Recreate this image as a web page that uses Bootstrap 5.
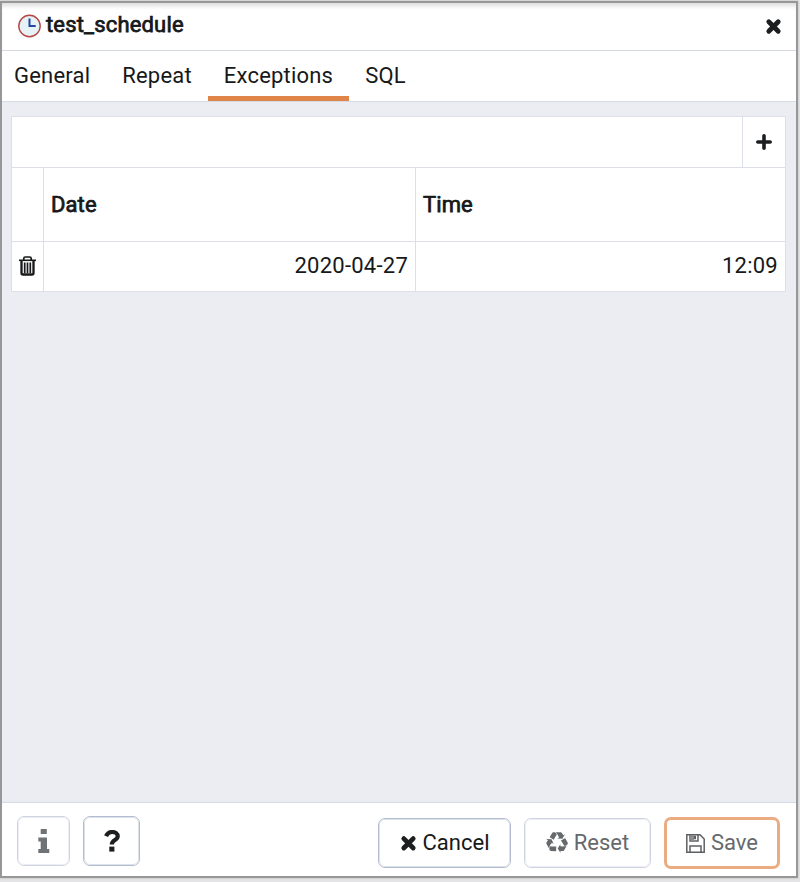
<!DOCTYPE html>
<html lang="en">
<head>
<meta charset="utf-8">
<title>test_schedule</title>
<meta name="viewport" content="width=device-width, initial-scale=1">
<link rel="stylesheet" href="https://cdn.jsdelivr.net/npm/bootstrap@5.3.0/dist/css/bootstrap.min.css">
<style>
html, body { height: 100%; }
body { font-family: Roboto, sans-serif; font-size: 22px; line-height: 30px; color: #161819; background: #e4e4e6; padding: 1px 2px 4px 0; overflow: hidden; }
.dialog { height: 877px; border: 2px solid #979797; background: #ebedf3; box-shadow: 0 0 2px #bbb; }
.dialog svg { display: block; flex: none; }
.title-bar { height: 48px; padding: 0 14px 0 15px; border-bottom: 1px solid #d5d9e3; box-shadow: inset 0 5px 4px -2px #dedede; }
.title-bar .clock { margin-top: -1px; }
.heavy { font-weight: 400; -webkit-text-stroke: .75px currentColor; }
.title-text { margin: -3px 0 0 5px; letter-spacing: .17px; }
.tab-strip { height: 51px; border-bottom: 1px solid #d8dbe3; }
.tab-strip .nav-link { height: 50px; padding: 10px 16px 0; color: #161819; letter-spacing: .2px; border-bottom: 5px solid transparent; }
.tab-strip .nav-link.active { border-color: #e0854a; }
.tab-strip .tab-first { padding-left: 12px; }
.content-pane { padding: 14px 10px 0 9px; }
.tool-row { height: 52px; border: 1px solid #dcdfe7; }
.add-btn { width: 43px; border: 0; border-left: 1px solid #dcdfe7; background: none; padding: 0; }
.grid { table-layout: fixed; margin: 0; border-collapse: separate; border-spacing: 0; border-left: 1px solid #dcdfe7; color: #161819; }
.grid th, .grid td { border: solid #dcdfe7; border-width: 0 1px 1px 0; background: #fff; padding: 0 7px; vertical-align: middle; }
.grid th { height: 74px; letter-spacing: .1px; }
.grid td { height: 50px; padding-bottom: 2px; letter-spacing: .25px; }
.grid td.text-end { padding-bottom: 1px; }
.col-tool { width: 32px; }
.col-date { width: 372px; }
.footer-bar { height: 74px; border-top: 1px solid #d5d9e3; padding: 0 16px 0 15px; }
.footer-bar .btn { height: 50px; font-size: 22px; line-height: 30px; border: 1.5px solid #b4bccf; outline: 1px solid #dde1ea; outline-offset: -2px; border-radius: 7px; padding: 0; color: #161819; }
.footer-bar .btn.dim { color: #66696c; border-color: #cfd4e0; outline-color: #eceef3; }
.footer-bar .btn.save { height: 52px; width: 116px; margin-top: -1px; border: 3px solid #ebac81; outline: 0; }
.w-info { width: 53px; }
.w-help { width: 57px; }
.w-cancel { width: 133px; }
.w-reset { width: 127px; }
.left-tools { gap: 13px; padding-top: 13px; }
.right-tools { gap: 13px; padding-top: 15px; }
.right-tools .btn { gap: 6px; }
</style>
</head>
<body>
<main class="dialog d-flex flex-column">
  <header class="title-bar bg-white d-flex align-items-center justify-content-between">
    <div class="d-flex align-items-center">
      <svg class="clock" width="24" height="24" viewBox="0 0 24 24"><circle cx="12.5" cy="12" r="10.7" fill="#e7f2f7" stroke="#b84444" stroke-width="1.4"/><path d="M12.5 4.5V12.1H18.7" fill="none" stroke="#2447a6" stroke-width="2"/></svg>
      <span class="heavy title-text">test_schedule</span>
    </div>
    <svg width="17" height="17" viewBox="0 0 17 17"><path d="M3.8 3.8L13.2 13.2M13.2 3.8L3.8 13.2" stroke="#1c1e20" stroke-width="4.8" stroke-linecap="round"/></svg>
  </header>
  <nav class="tab-strip nav bg-white flex-nowrap">
    <a class="nav-link tab-first" href="#">General</a>
    <a class="nav-link" href="#">Repeat</a>
    <a class="nav-link active" href="#">Exceptions</a>
    <a class="nav-link" href="#">SQL</a>
  </nav>
  <section class="content-pane flex-grow-1">
    <div class="tool-row bg-white d-flex justify-content-end">
      <button class="add-btn d-flex align-items-center justify-content-center" aria-label="Add row">
        <svg width="16" height="16" viewBox="0 0 16 16"><path d="M8 1.8V14.2M1.8 8H14.2" stroke="#1c1e20" stroke-width="3.6" stroke-linecap="round"/></svg>
      </button>
    </div>
    <table class="grid w-100">
      <colgroup><col class="col-tool"><col class="col-date"><col></colgroup>
      <thead><tr><th></th><th><span class="heavy">Date</span></th><th><span class="heavy">Time</span></th></tr></thead>
      <tbody><tr>
        <td><svg width="17" height="20" viewBox="0 0 17 20" fill="none" stroke="#161819"><path d="M0 4.3H17" stroke-width="1.6"/><path d="M4.8 4V2.5Q4.8 1 6.3 1H10.7Q12.2 1 12.2 2.5V4" stroke-width="1.7"/><path d="M2.5 5V17Q2.5 18.5 4 18.5H13Q14.5 18.5 14.5 17V5" stroke-width="2.3"/><path d="M5.7 6.5V17M8.5 6.5V17M11.3 6.5V17" stroke-width="1.7"/></svg></td>
        <td class="text-end">2020-04-27</td><td class="text-end">12:09</td>
      </tr></tbody>
    </table>
  </section>
  <footer class="footer-bar bg-white d-flex justify-content-between">
    <div class="d-flex left-tools">
      <button class="btn dim w-info d-flex align-items-center justify-content-center" aria-label="Info">
        <svg width="12" height="24" viewBox="0 0 12 24" fill="#707375"><path d="M2.7 0H8.8V5H2.7ZM.3 8.5H9V20H11.3V24H.3V20H2.7V12.5H.3Z"/></svg>
      </button>
      <button class="btn w-help d-flex align-items-center justify-content-center" aria-label="Help">
        <svg width="16" height="22" viewBox="0 0 16 22"><path d="M2 6.2Q4 2 8 2C11.5 2 13.7 3.8 13.7 6.3C13.7 10.5 7.8 9.5 7.8 14.6" fill="none" stroke="#1c1e20" stroke-width="4.2"/><path d="M5.3 16.6H10.4V21.6H5.3Z" fill="#1c1e20"/></svg>
      </button>
    </div>
    <div class="d-flex right-tools">
      <button class="btn w-cancel d-flex align-items-center justify-content-center">
        <svg width="17" height="17" viewBox="0 0 17 17"><path d="M3.8 3.6L13.2 13M13.2 3.6L3.8 13" stroke="#1c1e20" stroke-width="4.8" stroke-linecap="round"/></svg>
        <span>Cancel</span>
      </button>
      <button class="btn dim w-reset d-flex align-items-center justify-content-center">
        <svg width="22" height="23" viewBox="0 0 1792 1850" fill="#66696c"><path d="M836 1169l-15 368-2 22-420-29q-36-3-67-31.500t-47-65.500q-11-27-14.500-55t4-65 12-55 21.500-64 19-53q78 12 509 28zm-387-586l180 379-147-92q-63 72-111.500 144.500t-72.500 125-39.500 94.500-18.500 63l-4 21-190-357q-17-26-18-56t6-47l8-18q35-63 114-188l-140-86zm1231 517l-188 359q-12 29-36.500 46.500t-43.500 20.500l-18 4q-71 7-219 12l8 164-230-367 211-362 7 173q170 16 283 5t170-33zm-785-924q-47 63-265 435l-317-187-19-12 225-356q20-31 60-45t80-10q24 2 48.500 12t42 21 41.500 33 36 34.500 36 39.500 32 35zm655 307l212 363q18 37 12.500 76t-27.500 74q-13 20-33 37t-38 28-48.500 22-47 16-51.500 14-46 12q-34-72-265-436l313-195zm-143-226l142-83-220 373-419-20 151-86q-34-89-75-166t-75.500-123.500-64.500-80-47-46.500l-17-13 405 1q31-3 58 10.500t39 28.500l11 15q39 61 112 190z"/></svg>
        <span>Reset</span>
      </button>
      <button class="btn dim save d-flex align-items-center justify-content-center">
        <svg width="19" height="19" viewBox="0 0 19 19" fill="none" stroke="#5d6063" stroke-width="1.5"><path d="M.8.8H14L18.2 5V18.2H.8ZM4 18V12H15V18M4 1V7H12V1"/><path d="M4.5 1H8V6.5H4.5Z" fill="#8b8d8f" stroke="none"/><path d="M8 1.8H10V5.3H8Z" fill="#5d6063" stroke="none"/></svg>
        <span>Save</span>
      </button>
    </div>
  </footer>
</main>
<script src="https://cdn.jsdelivr.net/npm/bootstrap@5.3.0/dist/js/bootstrap.bundle.min.js"></script>
</body>
</html>
